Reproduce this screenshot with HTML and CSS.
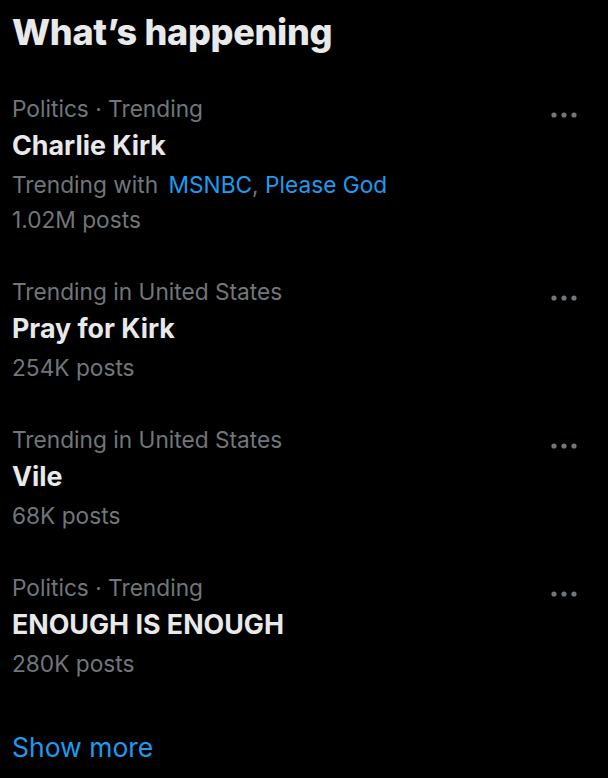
FILE: index.html
```html
<!DOCTYPE html>
<html lang="en">
<head>
    <meta charset="UTF-8">
    <meta name="viewport" content="width=device-width, initial-scale=1.0">
    <title>What's happening</title>
    <link rel="stylesheet" href="styles.css">
</head>
<body>
    <section class="trends">
        <h2 class="trends-title">What’s happening</h2>

        <div class="trend">
            <div class="trend-body">
                <div class="trend-meta">Politics · Trending</div>
                <div class="trend-name">Charlie Kirk</div>
                <div class="trend-with">Trending with <a href="#">MSNBC</a>, <a href="#">Please God</a></div>
                <div class="trend-count close">1.02M posts</div>
            </div>
            <button class="more" aria-label="More">
                <svg viewBox="0 0 26 6" width="26" height="6"><circle cx="3" cy="3" r="2.6"/><circle cx="13" cy="3" r="2.6"/><circle cx="23" cy="3" r="2.6"/></svg>
            </button>
        </div>

        <div class="trend">
            <div class="trend-body">
                <div class="trend-meta">Trending in United States</div>
                <div class="trend-name">Pray for Kirk</div>
                <div class="trend-count">254K posts</div>
            </div>
            <button class="more" aria-label="More">
                <svg viewBox="0 0 26 6" width="26" height="6"><circle cx="3" cy="3" r="2.6"/><circle cx="13" cy="3" r="2.6"/><circle cx="23" cy="3" r="2.6"/></svg>
            </button>
        </div>

        <div class="trend">
            <div class="trend-body">
                <div class="trend-meta">Trending in United States</div>
                <div class="trend-name">Vile</div>
                <div class="trend-count">68K posts</div>
            </div>
            <button class="more" aria-label="More">
                <svg viewBox="0 0 26 6" width="26" height="6"><circle cx="3" cy="3" r="2.6"/><circle cx="13" cy="3" r="2.6"/><circle cx="23" cy="3" r="2.6"/></svg>
            </button>
        </div>

        <div class="trend">
            <div class="trend-body">
                <div class="trend-meta">Politics · Trending</div>
                <div class="trend-name">ENOUGH IS ENOUGH</div>
                <div class="trend-count">280K posts</div>
            </div>
            <button class="more" aria-label="More">
                <svg viewBox="0 0 26 6" width="26" height="6"><circle cx="3" cy="3" r="2.6"/><circle cx="13" cy="3" r="2.6"/><circle cx="23" cy="3" r="2.6"/></svg>
            </button>
        </div>

        <a href="#" class="show-more">Show more</a>
    </section>
</body>
</html>
```

FILE: styles.css
```css
:root {
    --bg: #000000;
    --text-primary: #e7e9ea;
    --text-secondary: #71767b;
    --accent: #1d9bf0;
}

* {
    margin: 0;
    padding: 0;
    box-sizing: border-box;
}

body {
    background: var(--bg);
    color: var(--text-primary);
    font-family: Inter, "Noto Sans", "Liberation Sans", sans-serif;
    min-height: 100vh;
}

.trends {
    padding: 10px 0 0 12px;
}

.trends-title {
    font-size: 36px;
    line-height: 44px;
    font-weight: 800;
    letter-spacing: -0.3px;
    margin-bottom: 19px;
}

.trend {
    display: flex;
    align-items: flex-start;
    padding: 22px 0;
}

.trend-body {
    flex: 1;
}

.trend-meta,
.trend-with,
.trend-count {
    font-size: 22.7px;
    line-height: 28px;
    color: var(--text-secondary);
}

.trend-name {
    font-size: 26.8px;
    line-height: 34px;
    font-weight: 700;
    margin-top: 5px;
}

.trend-with {
    margin-top: 9px;
}

.trend-with a {
    color: var(--accent);
    text-decoration: none;
    margin-left: 4px;
}

.trend-with a + a {
    margin-left: 0;
}

.trend-count {
    margin-top: 9px;
}

.trend-count.close {
    margin-top: 7px;
}

.more {
    background: none;
    border: none;
    width: 26px;
    height: 6px;
    margin: 17px 31px 0 0;
    display: flex;
}

.more svg {
    fill: var(--text-secondary);
}

.show-more {
    display: block;
    padding: 33px 0 0;
    font-size: 26.5px;
    line-height: 28px;
    color: var(--accent);
    text-decoration: none;
}
```
